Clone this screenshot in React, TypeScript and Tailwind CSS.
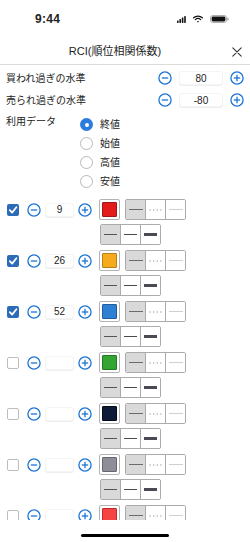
import React from "react";

const rows = [
  { on: true, val: "9", color: "#e31b1b", edge: "#9e1616" },
  { on: true, val: "26", color: "#f6ab1f", edge: "#b98115" },
  { on: true, val: "52", color: "#2e80d2", edge: "#1f5d9c" },
  { on: false, val: "", color: "#33a532", edge: "#217a22" },
  { on: false, val: "", color: "#0e1b38", edge: "#050a16" },
  { on: false, val: "", color: "#8e8e98", edge: "#66666e" },
  { on: false, val: "", color: "#f64444", edge: "#c22a2a" },
];

function CircleBtn({ plus }: { plus?: boolean }) {
  return (
    <svg width="14" height="14" viewBox="0 0 14 14" className="shrink-0">
      <circle cx="7" cy="7" r="6.1" fill="none" stroke="#1b74d4" strokeWidth="1.3" />
      <line x1="3.8" y1="7" x2="10.2" y2="7" stroke="#1b74d4" strokeWidth="1.3" />
      {plus && <line x1="7" y1="3.8" x2="7" y2="10.2" stroke="#1b74d4" strokeWidth="1.3" />}
    </svg>
  );
}

function NumInput({ value, w }: { value: string; w: string }) {
  return (
    <div
      className={`${w} h-[14px] rounded-[3px] bg-white border border-[#f4f4f4] shadow-[0_1px_1px_rgba(0,0,0,0.07)] flex items-center justify-center text-[10px] text-[#222] font-['Liberation_Sans',sans-serif]`}
    >
      {value}
    </div>
  );
}

function Radio({ on, label }: { on?: boolean; label: string }) {
  return (
    <div className="h-[19px] flex items-center gap-[7px]">
      {on ? (
        <span className="w-[13px] h-[13px] rounded-full bg-[#2c7be0] flex items-center justify-center">
          <span className="w-[4px] h-[4px] rounded-full bg-white" />
        </span>
      ) : (
        <span className="w-[13px] h-[13px] rounded-full border border-[#b8b8b8] bg-white" />
      )}
      <span className="text-[10px] text-[#222]">{label}</span>
    </div>
  );
}

function Check({ on }: { on: boolean }) {
  return on ? (
    <span className="w-[12px] h-[12px] rounded-[2px] bg-[#2c6bb8] flex items-center justify-center shrink-0">
      <svg width="10" height="10" viewBox="0 0 10 10">
        <path d="M1.8 5.2 L4.1 7.6 L8.4 2.3" fill="none" stroke="#fff" strokeWidth="1.8" strokeLinecap="round" strokeLinejoin="round" />
      </svg>
    </span>
  ) : (
    <span className="w-[12px] h-[12px] rounded-[2px] border border-[#bdbdbd] bg-white shrink-0" />
  );
}

function Swatch({ color, edge }: { color: string; edge: string }) {
  return (
    <div className="w-[21px] h-[21px] rounded-[2px] border border-[#b3b3b3] bg-white flex items-center justify-center">
      <span className="w-[15px] h-[15px] rounded-[1px] border" style={{ background: color, borderColor: edge }} />
    </div>
  );
}

function StyleGroup() {
  return (
    <div className="w-[61px] h-[21px] rounded-[2px] border border-[#ababab] flex overflow-hidden">
      <div className="flex-1 bg-[#d9d9d9] flex items-center justify-center">
        <span className="w-[14px] h-[1.5px] bg-[#6a6a6a]" />
      </div>
      <div className="flex-1 border-l border-[#ababab] bg-white flex items-center justify-center">
        <svg width="14" height="2" viewBox="0 0 14 2">
          <line x1="0.5" y1="1" x2="14" y2="1" stroke="#8a8a8a" strokeWidth="1" strokeDasharray="1.2 2.4" />
        </svg>
      </div>
      <div className="flex-1 border-l border-[#ababab] bg-white flex items-center justify-center">
        <span className="w-[14px] h-[1px] bg-[#d0d0d0]" />
      </div>
    </div>
  );
}

function WidthGroup() {
  return (
    <div className="w-[61px] h-[21px] rounded-[2px] border border-[#ababab] flex overflow-hidden">
      <div className="flex-1 bg-[#d9d9d9] flex items-center justify-center">
        <span className="w-[13px] h-[1px] bg-[#555]" />
      </div>
      <div className="flex-1 border-l border-[#ababab] bg-white flex items-center justify-center">
        <span className="w-[13px] h-[1.5px] bg-[#4a4a52]" />
      </div>
      <div className="flex-1 border-l border-[#ababab] bg-white flex items-center justify-center">
        <span className="w-[13px] h-[3px] bg-[#4a4a55]" />
      </div>
    </div>
  );
}

export default function App() {
  return (
    <div className="w-[250px] h-[542px] bg-white flex flex-col overflow-hidden font-['Liberation_Sans','Noto_Sans_CJK_JP',sans-serif] text-[#222]">
      {/* status bar */}
      <div className="h-[38px] shrink-0 flex items-center justify-between pl-[35px] pr-[21px]">
        <span className="text-[12px] font-bold tracking-[0.3px]">9:44</span>
        <div className="flex items-center gap-[7px]">
          <svg width="9" height="7" viewBox="0 0 9 7">
            <rect x="0" y="4.5" width="1.6" height="2.5" rx="0.4" fill="#111" />
            <rect x="2.4" y="3" width="1.6" height="4" rx="0.4" fill="#111" />
            <rect x="4.8" y="1.5" width="1.6" height="5.5" rx="0.4" fill="#111" />
            <rect x="7.2" y="0" width="1.6" height="7" rx="0.4" fill="#111" />
          </svg>
          <svg width="10" height="8" viewBox="0 0 10 8">
            <path d="M0.6 2.8 A6.4 6.4 0 0 1 9.4 2.8" fill="none" stroke="#111" strokeWidth="1.2" strokeLinecap="round" />
            <path d="M2.3 4.6 A4 4 0 0 1 7.7 4.6" fill="none" stroke="#111" strokeWidth="1.2" strokeLinecap="round" />
            <path d="M3.9 6.4 L5 7.6 L6.1 6.4 A1.6 1.6 0 0 0 3.9 6.4 Z" fill="#111" />
          </svg>
          <svg width="19" height="8" viewBox="0 0 19 8">
            <rect x="0.5" y="0.5" width="16" height="7" rx="2.2" fill="none" stroke="#999" strokeWidth="0.8" />
            <rect x="1.6" y="1.6" width="13.8" height="4.8" rx="1.4" fill="#111" />
            <rect x="17.3" y="2.6" width="1.2" height="2.8" rx="0.5" fill="#999" />
          </svg>
        </div>
      </div>

      {/* header */}
      <div className="h-[27px] shrink-0 relative flex items-center justify-center pr-[20px] border-b border-[#dcdcdc]">
        <span className="text-[11px] text-[#222]">RCI(順位相関係数)</span>
        <svg width="10" height="10" viewBox="0 0 10 10" className="absolute right-[8px] top-[9px]">
          <path d="M0.8 0.8 L9.2 9.2 M9.2 0.8 L0.8 9.2" stroke="#333" strokeWidth="1.1" strokeLinecap="round" />
        </svg>
      </div>

      {/* content */}
      <div className="h-[455px] shrink-0 overflow-hidden">
        <div className="pt-[2px] pl-[6px] pr-[6px]">
          <div className="h-[22px] flex items-center">
            <span className="flex-1 text-[10px]">買われ過ぎの水準</span>
            <div className="flex items-center gap-[7px]">
              <CircleBtn />
              <NumInput value="80" w="w-[44px]" />
              <CircleBtn plus />
            </div>
          </div>
          <div className="h-[22px] flex items-center">
            <span className="flex-1 text-[10px]">売られ過ぎの水準</span>
            <div className="flex items-center gap-[7px]">
              <CircleBtn />
              <NumInput value="-80" w="w-[44px]" />
              <CircleBtn plus />
            </div>
          </div>
          <div className="mt-[4px] flex">
            <span className="w-[74px] text-[10px] leading-[14px]">利用データ</span>
            <div className="flex flex-col">
              <Radio on label="終値" />
              <Radio label="始値" />
              <Radio label="高値" />
              <Radio label="安値" />
            </div>
          </div>
        </div>

        <div className="mt-[8px] flex flex-col">
          {rows.map((r, i) => (
            <div key={i} className="h-[51px] shrink-0 flex flex-col">
              <div className="h-[21px] flex items-center pl-[7px]">
                <Check on={r.on} />
                <span className="w-[8px]" />
                <CircleBtn />
                <span className="w-[4px]" />
                <NumInput value={r.val} w="w-[29px]" />
                <span className="w-[4px]" />
                <CircleBtn plus />
                <span className="w-[7px]" />
                <Swatch color={r.color} edge={r.edge} />
                <span className="w-[5px]" />
                <StyleGroup />
              </div>
              <div className="mt-[4px] pl-[100px]">
                <WidthGroup />
              </div>
            </div>
          ))}
        </div>
      </div>

      {/* home indicator */}
      <div className="flex-1 flex items-end justify-center pb-[5px]">
        <span className="w-[88px] h-[3.5px] rounded-full bg-black" />
      </div>
    </div>
  );
}
